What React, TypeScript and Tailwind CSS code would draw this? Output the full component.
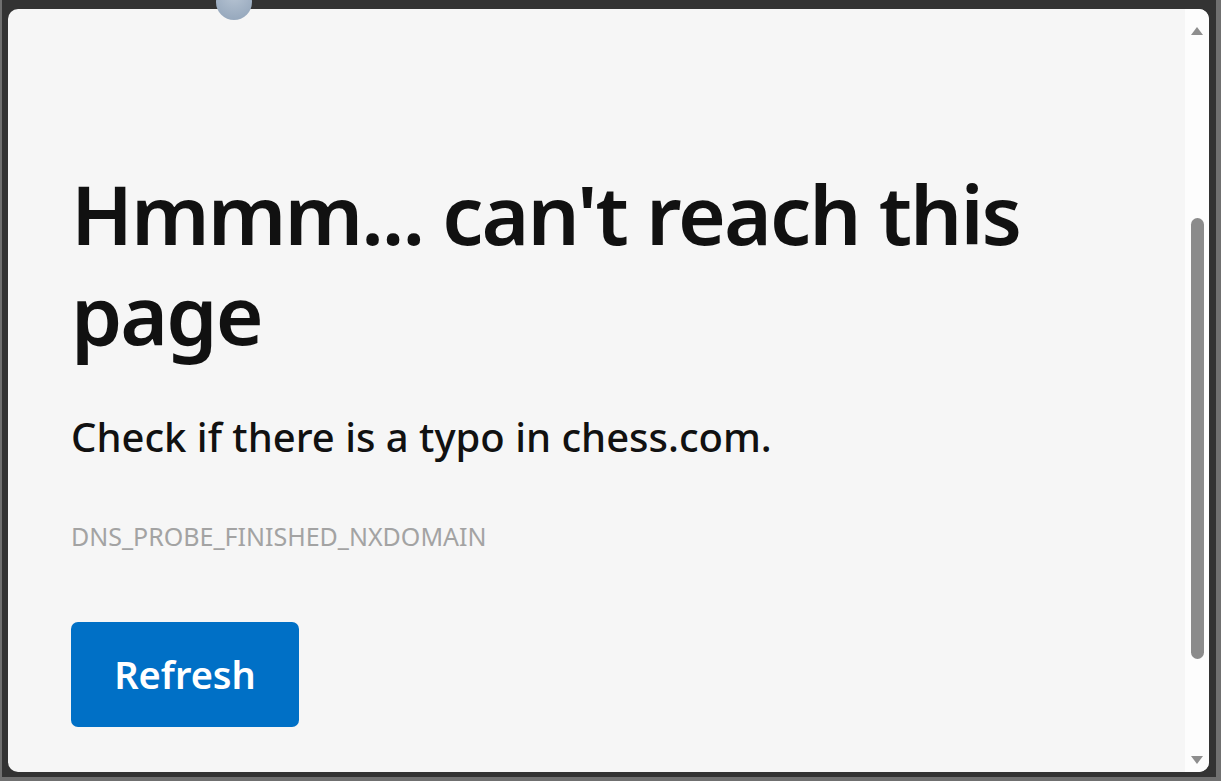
import React from "react";

const font = { fontFamily: '"Noto Sans", "Open Sans", sans-serif' };

function ScrollBar() {
  return (
    <div className="relative w-[24px] bg-[#fdfdfd] flex flex-col items-center">
      <svg className="mt-[18px]" width="12" height="8" viewBox="0 0 12 8">
        <path d="M6 0 L12 8 L0 8 Z" fill="#8e8e8e" />
      </svg>
      <div className="mt-[183px] w-[13px] h-[441px] rounded-full bg-[#8b8b8b]" />
      <div className="flex-1" />
      <svg className="mb-[8px]" width="12" height="8" viewBox="0 0 12 8">
        <path d="M0 0 L12 0 L6 8 Z" fill="#8e8e8e" />
      </svg>
    </div>
  );
}

export default function App() {
  return (
    <div className="relative w-[1221px] h-[781px] bg-[#707070] overflow-hidden" style={font}>
      <div className="ml-[2px] w-[1214px] h-[777px] bg-[#333333] pt-[9px] pl-[6px]">
        <div className="flex w-[1201px] h-[763px] rounded-[10px] overflow-hidden bg-[#f6f6f6]">
          <main className="flex-1 pl-[63px] pt-[154px]">
            <h1 className="text-[82px] leading-[100px] font-semibold text-[#111111] tracking-[-2px]">
              Hmmm... can't reach this page
            </h1>
            <p className="mt-[50px] text-[40px] leading-[48px] font-medium text-[#111111]">
              Check if there is a typo in chess.com.
            </p>
            <p className="mt-[60px] text-[25px] leading-[30px] text-[#a3a3a3]">
              DNS_PROBE_FINISHED_NXDOMAIN
            </p>
            <button className="mt-[71px] w-[228px] h-[105px] rounded-[7px] bg-[#0070c6] text-white text-[38px] font-semibold">
              Refresh
            </button>
          </main>
          <ScrollBar />
        </div>
      </div>
      <div className="absolute left-[216px] top-[-16px] w-[36px] h-[36px] rounded-full bg-[radial-gradient(circle_at_50%_30%,#b7c4d3,#8fa2b8)]" />
    </div>
  );
}
